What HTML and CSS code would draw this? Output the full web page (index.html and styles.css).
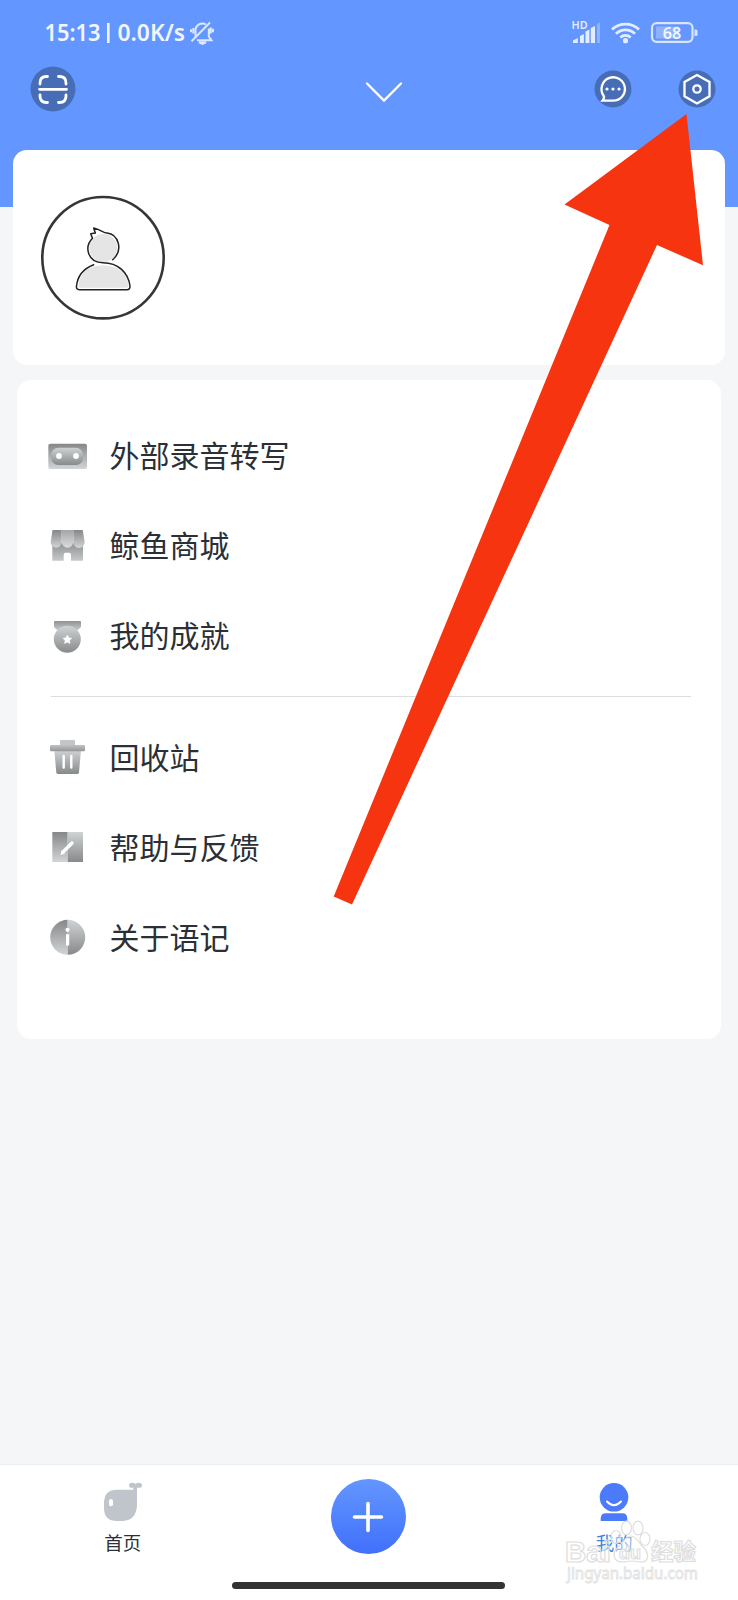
FILE: index.html
```html
<!DOCTYPE html>
<html lang="zh-CN">
<head>
<meta charset="utf-8">
<title>我的</title>
<link rel="stylesheet" href="styles.css">
</head>
<body>
<svg class="defs" width="0" height="0">
  <defs>
    <linearGradient id="dark" x1="0" y1="0" x2="0" y2="1"><stop offset="0" stop-color="#858788"/><stop offset="1" stop-color="#d2d5d7"/></linearGradient>
    <linearGradient id="light" x1="0" y1="0" x2="0" y2="1"><stop offset="0" stop-color="#d0d3d5"/><stop offset="1" stop-color="#87898a"/></linearGradient>
    <linearGradient id="soft" x1="0" y1="0" x2="0" y2="1"><stop offset="0" stop-color="#8f9192"/><stop offset="1" stop-color="#c6c9cb"/></linearGradient>
    <linearGradient id="mid" x1="0" y1="0" x2="0" y2="1"><stop offset="0" stop-color="#a3a5a6"/><stop offset="1" stop-color="#dadcdd"/></linearGradient>
    <linearGradient id="lid" x1="0" y1="0" x2="0" y2="1"><stop offset="0" stop-color="#c0c3c4"/><stop offset="1" stop-color="#939596"/></linearGradient>
  </defs>
</svg>
<div class="screen">
  <header class="header">
    <div class="status">
      <svg class="status-left" width="180" height="32" viewBox="40 17 180 32">
        <g class="status-text">
          <text x="44.500" y="41" textLength="56" lengthAdjust="spacingAndGlyphs">15:13</text>
          <text x="117.500" y="41" textLength="67.500" lengthAdjust="spacingAndGlyphs">0.0K/s</text>
        </g>
        <path class="bar" d="M108.300 23v20"/>
        <g class="bell">
          <path d="M195.500 36.500V30.500a7 7 0 0 1 10.500-6M208.800 28.500v8l2.700 3.800h-14.500M191.500 41.300l18.500-18.800M193.300 28v5.500M191 29.300v3M210.800 27.500v6M213 28.800v3.500"/>
          <path d="M199 42.300h7l-3.500 1.500z"/>
        </g>
      </svg>
      <svg class="status-right" width="130" height="32" viewBox="570 17 130 32">
        <text class="hd" x="571.500" y="29.300" textLength="16" lengthAdjust="spacingAndGlyphs">HD</text>
        <g fill="#e3edff">
          <path d="M573 43v-2.500l4.800-2.500v5zM580 43v-7l3.900-2v9zM585.500 43V31.500l3.900-2V43zM590.800 43V28l4.200-2v17z"/>
          <path d="M597 43V24l3-1.500V43z" opacity=".35"/>
          <circle cx="625.500" cy="40.700" r="2.600"/>
        </g>
        <g class="wifi">
          <path d="M612 29.500a19.500 19.500 0 0 1 27 0M616 33.700a13.500 13.500 0 0 1 19 0M620.300 37.500a7.500 7.500 0 0 1 10.400 0"/>
        </g>
        <rect x="656" y="26.500" width="22.500" height="12" fill="#8db2ff"/>
        <rect class="battery" x="652" y="23.200" width="40.500" height="18.600" rx="4.500"/>
        <path d="M694.500 29.500h1.500q1.500 0 1.500 1.500v3.500q0 1.500-1.500 1.500h-1.500z" fill="#d7e5ff"/>
        <text class="level" x="672" y="38.500" text-anchor="middle" textLength="18.500" lengthAdjust="spacingAndGlyphs">68</text>
      </svg>
    </div>
    <div class="toolbar">
      <svg class="scan" width="46" height="46" viewBox="-23 -23 46 46">
        <circle r="22.500" fill="#486db7"/>
        <path d="M-13-5v-1q0-6.500 6.500-6.500h1M5.500-12.500h1q6.500 0 6.500 6.500v1M13 6v1q0 6.500-6.500 6.500h-1M-5.500 13.500h-1Q-13 13.500-13 7V6M-13.500.300h27"/>
      </svg>
      <svg class="chevron" width="40" height="24" viewBox="-20 -12 40 24"><path d="M-17-8.500 0 8.500 17-8.500"/></svg>
      <div class="actions">
        <svg class="action" width="38" height="38" viewBox="-19 -19 38 38">
          <circle r="18.500" fill="#486db7"/>
          <path d="M-10.500 11.700H0A11.700 11.700 0 1 0-9.500 6.500Q-8 8.500-10.500 11.700z"/>
          <g fill="#fff"><circle cx="-6" cy="0" r="1.600"/><circle cx="0" cy="0" r="1.600"/><circle cx="6" cy="0" r="1.600"/></g>
        </svg>
        <svg class="action" width="38" height="38" viewBox="-19 -19 38 38">
          <circle r="18.500" fill="#486db7"/>
          <path d="M0-14 12.500-7V7.300L0 14.500-12.500 7.300V-7z"/>
          <circle class="ring" r="3.700"/>
        </svg>
      </div>
    </div>
  </header>

  <main class="content">
    <section class="profile">
      <svg class="avatar" width="124" height="125" viewBox="0 -.7 124 125">
        <circle cx="62" cy="62" r="60.700" fill="#fff" stroke="#353737" stroke-width="2.600"/>
        <circle cx="62.300" cy="52.400" r="14" fill="#e5e5e5"/>
        <path d="M37.500 90q2-20 24.500-20.500 23 .5 25.500 20.500 0 2-2 2h-46q-2 0-2-2z" fill="#e5e5e5"/>
        <path class="outline" d="M71.700 64C83 54 77 38.500 66 37.300 62 37.300 61 34.500 52.700 32.400L54.300 37.400 49.700 38 51.500 42.500C43 51 46.500 67 62 67 77 67 87.500 77 89 90.500Q89 94 86 94H38.500Q35 94 35.500 90.500 37 75 52.700 69"/>
      </svg>
    </section>

    <nav class="menu">
      <a class="item">
        <svg class="icon" viewBox="0 0 40 40">
          <rect x="1.300" y="7.700" width="38.700" height="25.300" rx="2" fill="url(#dark)"/>
          <rect x="4.300" y="11.700" width="31.700" height="17.300" rx="7" fill="url(#light)"/>
          <circle cx="12" cy="20" r="2.900" fill="#fff"/><circle cx="29" cy="20" r="2.900" fill="#fff"/>
        </svg>
        <span>外部录音转写</span>
      </a>
      <a class="item">
        <svg class="icon" viewBox="0 0 40 40">
          <path d="M5.300 17H36v17.700H24v-6q0-2-2-2h-3.300q-2 0-2 2v6H5.300z" fill="url(#soft)"/>
          <path d="M5.500 4h9.200v12.200a5.500 5.500 0 0 1-11 0zM26.300 4h9.400l2 12.200a5.700 5.700 0 0 1-11.400 0z" fill="url(#dark)"/>
          <path d="M14.700 4h11.600v12a5.800 5.800 0 0 1-11.600 0z" fill="url(#mid)"/>
        </svg>
        <span>鲸鱼商城</span>
      </a>
      <a class="item">
        <svg class="icon" viewBox="0 0 40 40">
          <path d="M8 5h25q1 0 1 1v5l-3 3H10l-3-3V6q0-1 1-1z" fill="url(#soft)"/>
          <circle cx="20.300" cy="23.300" r="13.500" fill="url(#light)"/>
          <path d="M20.300 19.200l1.300 2.700 2.900.400-2.100 2.100.500 2.900-2.600-1.300-2.600 1.300.500-2.900-2.100-2.100 2.900-.400z" fill="#fff" stroke="#fff" stroke-width=".8" stroke-linejoin="round"/>
        </svg>
        <span>我的成就</span>
      </a>
      <hr class="divider">
      <a class="item">
        <svg class="icon" viewBox="0 0 40 40">
          <path d="M14 2h13q1 0 1 1v5H13V3q0-1 1-1z" fill="#c3c6c8"/>
          <path d="M7.300 12H34l-2 22.500q-.2 1.500-2 1.500H11.300q-1.800 0-2-1.500z" fill="url(#light)"/>
          <rect x="3" y="7" width="35" height="6.300" rx="1" fill="url(#lid)"/>
          <path d="M16.700 18v11.500M24.300 18v11.500" stroke="#fff" stroke-width="2.400" stroke-linecap="round"/>
        </svg>
        <span>回收站</span>
      </a>
      <a class="item">
        <svg class="icon" viewBox="0 0 40 40">
          <path d="M5.300 4h15.400v30H5.300z" fill="url(#dark)"/>
          <path d="M20.700 4H36v30H20.700z" fill="url(#light)"/>
          <path d="M15.800 24.300 25 15" stroke="#fff" stroke-width="3.400" stroke-linecap="round"/>
          <path d="M13.500 27l1-4.500 3.500 3.200z" fill="#fff"/>
        </svg>
        <span>帮助与反馈</span>
      </a>
      <a class="item">
        <svg class="icon" viewBox="0 0 40 40">
          <path d="M20.700 1.800a17.500 17.500 0 0 0 0 35z" fill="url(#dark)"/>
          <path d="M20.700 1.800a17.500 17.500 0 0 1 0 35z" fill="url(#light)"/>
          <circle cx="20.500" cy="11.800" r="2.100" fill="#fff"/>
          <path d="M19 16.200h3.200v10q0 1.600-1.600 1.600T19 26.200z" fill="#fff"/>
        </svg>
        <span>关于语记</span>
      </a>
    </nav>
  </main>

  <footer class="tabbar">
    <div class="tabs">
      <a class="tab">
        <svg width="40" height="40" viewBox="0 0 40 40">
          <path d="M13 7.700H30.300V5.700H28q-2 0-2-2.200Q26 .700 29 .700q2.500 0 3.500 1.300 1-1.300 3.500-1.300 3 0 3 2.800 0 2.200-2 2.200H34V24Q33 38 20 39H14Q1 39 1 26V19Q2 8 13 7.700z" fill="#bfc5ca"/>
          <rect x="6" y="17" width="4" height="7.300" rx="2" fill="#fff"/>
        </svg>
        <span>首页</span>
      </a>
      <a class="add">
        <svg width="32" height="32" viewBox="-16 -16 32 32"><path d="M-13.500 0h27M0-13.500v27"/></svg>
      </a>
      <a class="tab active">
        <svg width="40" height="40" viewBox="0 0 40 40">
          <circle cx="20" cy="15.300" r="14.300" fill="#4b7bfa"/>
          <path d="M13 19.500q7 7.500 14 0" fill="none" stroke="#fff" stroke-width="2" stroke-linecap="round"/>
          <path d="M6.700 39v-2.500q0-5.200 5.200-5.200h16.200q5.200 0 5.200 5.200V39z" fill="#4b7bfa"/>
        </svg>
        <span>我的</span>
      </a>
    </div>
    <div class="home-indicator"></div>
  </footer>

  <svg class="watermark" width="140" height="70" viewBox="562 1518 140 70">
    <g class="mark">
      <ellipse cx="616" cy="1537" rx="5" ry="6.500"/>
      <ellipse cx="626.500" cy="1528" rx="5" ry="6.800"/>
      <ellipse cx="638" cy="1528" rx="5" ry="6.800"/>
      <ellipse cx="645" cy="1539" rx="5" ry="6.500"/>
      <path d="M631 1536c-6 0-8 7-13 11-6 5-5 15 4 15 4 0 6-1 10-1s6 1 10 1c7 0 7-9 2-14-5-4-7-12-13-12z"/>
      <text class="wm-logo" x="565" y="1561.500" textLength="46" lengthAdjust="spacingAndGlyphs">Bai</text>
      <text class="wm-du" x="619" y="1559" textLength="22" lengthAdjust="spacingAndGlyphs">du</text>
      <text class="wm-cn" x="651" y="1560" textLength="45" lengthAdjust="spacingAndGlyphs">经验</text>
      <text class="wm-url" x="567" y="1579" textLength="131" lengthAdjust="spacingAndGlyphs">jingyan.baidu.com</text>
    </g>
  </svg>
  <svg class="arrow" width="738" height="1000" viewBox="0 0 738 1000">
    <path d="M686.500 114 564.500 204.500 609.500 225 333.700 896.500 352 904.500 657 245 703 265.200z" fill="#f63510"/>
  </svg>
</div>
</body>
</html>
```
FILE: styles.css
```css
* { box-sizing: border-box; }
body {
  margin: 0;
  background: #f5f6f8;
  font-family: "Noto Sans CJK SC", sans-serif;
  color: #2b2f36;
}
svg { display: block; flex: none; }
.defs { position: absolute; }
.screen {
  position: relative;
  display: flex;
  flex-direction: column;
  width: 738px;
  height: 1600px;
  overflow: hidden;
}

.header {
  flex: none;
  height: 207px;
  padding-top: 17px;
  background: #6496ff;
}
.status {
  display: flex;
  justify-content: space-between;
  padding: 0 38px 0 40px;
}
.status-text {
  font: 600 23px "Noto Sans", sans-serif;
  fill: #f0f5ff;
}
.bar { stroke: #f0f5ff; stroke-width: 2.6; }
.bell path { fill: none; stroke: #dce8ff; stroke-width: 2; }
.hd { font: 600 10.5px "Noto Sans", sans-serif; fill: #e3edff; }
.level { font: 600 16px "Noto Sans", sans-serif; fill: #f2f7ff; }
.wifi path { fill: none; stroke: #e3edff; stroke-width: 2.8; }
.battery { fill: none; stroke: #d7e5ff; stroke-width: 2.2; }

.toolbar {
  display: grid;
  grid-template-columns: 1fr 40px 1fr;
  align-items: center;
  height: 46px;
  margin-top: 17px;
  padding: 0 22.5px 0 29.5px;
}
.toolbar path, .ring { fill: none; stroke: #fff; stroke-width: 2.3; stroke-linecap: round; }
.toolbar .scan path { stroke-width: 2.8; }
.chevron { margin: 5px 0 0 11.5px; }
.actions { display: flex; justify-content: flex-end; gap: 45.5px; }

.content { flex: 1; margin-top: -57px; }
.profile {
  height: 215px;
  margin: 0 13px;
  padding: 45px 28px;
  border-radius: 14px;
  background: #fff;
}
.outline { fill: none; stroke: #222; stroke-width: 1.5; stroke-linejoin: round; stroke-linecap: round; }

.menu {
  height: 659px;
  margin: 15px 17px 0 17px;
  padding: 31px 30px 0 30px;
  border-radius: 14px;
  background: #fff;
}
.item {
  display: flex;
  align-items: center;
  gap: 22.5px;
  height: 90px;
  font-size: 30px;
  line-height: 44px;
}
.item span { margin-bottom: 4px; }
.icon { width: 40px; height: 40px; overflow: visible; }
.divider {
  height: 1px;
  margin: 15px 0 16px 4px;
  border: 0;
  background: #dcddde;
}

.tabbar {
  flex: none;
  display: flex;
  flex-direction: column;
  align-items: center;
  height: 136px;
  border-top: 1px solid #eceef0;
  background: #fff;
}
.tabs {
  display: grid;
  grid-template-columns: repeat(3, 1fr);
  justify-items: center;
  width: 100%;
  height: 117px;
  padding: 14px 1px 0 0;
}
.tab {
  display: flex;
  flex-direction: column;
  align-items: center;
  gap: 7px;
  padding-top: 3px;
  font-size: 18.5px;
  line-height: 26px;
}
.tab.active { color: #3f84de; }
.add {
  display: flex;
  align-items: center;
  justify-content: center;
  width: 75px;
  height: 75px;
  border-radius: 50%;
  background: linear-gradient(#6396ff, #4170fb);
}
.add path { stroke: #fff; stroke-width: 3.6; stroke-linecap: round; }
.home-indicator {
  width: 273px;
  height: 7px;
  margin-right: 1px;
  border-radius: 4px;
  background: #333;
}

.arrow { position: absolute; left: 0; top: 0; }
.watermark { position: absolute; left: 562px; top: 1518px; }
.mark * { fill: rgba(255, 255, 255, .45); stroke: #dedede; stroke-width: 1.2; }
.wm-logo { font: 700 29px "Liberation Sans", sans-serif; }
.wm-du { font: 700 19px "Liberation Sans", sans-serif; }
.wm-cn { font: 700 23px "Noto Sans CJK SC", sans-serif; }
.mark .wm-url { font: 400 16px "Noto Sans", sans-serif; stroke-width: .8; }
```
